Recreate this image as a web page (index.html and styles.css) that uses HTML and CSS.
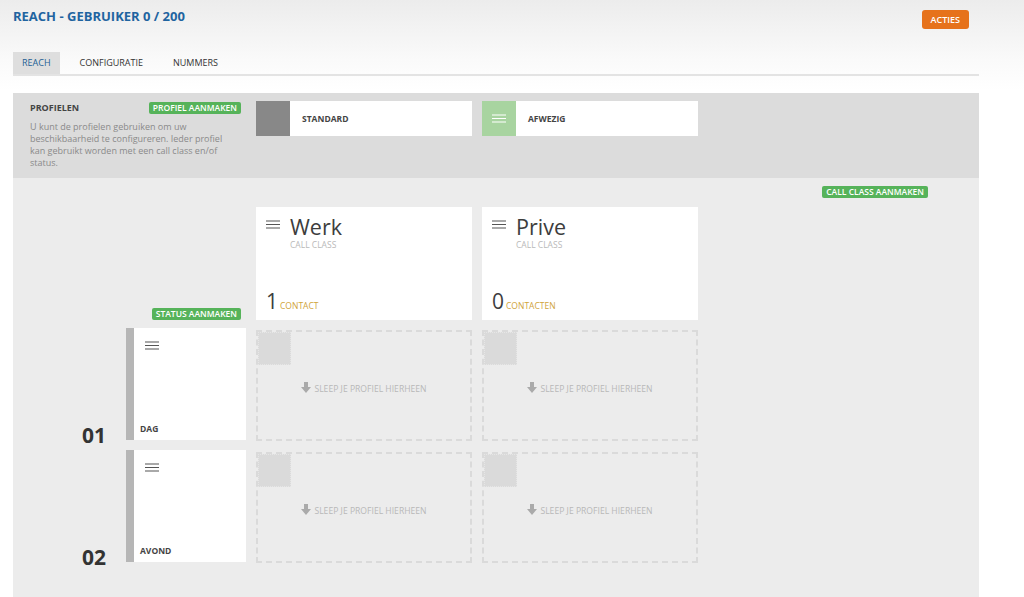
FILE: index.html
```html
<!DOCTYPE html>
<html lang="nl">
<head>
<meta charset="utf-8">
<title>Reach</title>
<link rel="stylesheet" href="styles.css">
</head>
<body>
<header class="top">
  <div class="titlebar">
    <h1 class="title">REACH - GEBRUIKER 0 / 200</h1>
    <button class="btn-acties">ACTIES</button>
  </div>
  <nav class="tabs">
    <a class="tab active">REACH</a>
    <a class="tab">CONFIGURATIE</a>
    <a class="tab">NUMMERS</a>
  </nav>
</header>

<main class="panel">
  <section class="profiles">
    <div class="intro">
      <div class="intro-head">
        <span class="intro-label">PROFIELEN</span>
        <span class="badge">PROFIEL AANMAKEN</span>
      </div>
      <p class="intro-text">U kunt de profielen gebruiken om uw beschikbaarheid te configureren. Ieder profiel kan gebruikt worden met een call class en/of status.</p>
    </div>
    <div class="profile-card">
      <span class="swatch swatch-grey"></span>
      <span class="profile-name">STANDARD</span>
    </div>
    <div class="profile-card">
      <span class="swatch swatch-green">
        <svg class="burger" width="14" height="9" viewBox="0 0 14 9"><path d="M0 1h14M0 4.5h14M0 8h14" stroke="#fff" stroke-width="1.2"/></svg>
      </span>
      <span class="profile-name">AFWEZIG</span>
    </div>
  </section>

  <section class="board">
    <div class="cc-actions"><span class="badge">CALL CLASS AANMAKEN</span></div>

    <div class="row cc-row">
      <div class="side side-badge"><span class="badge">STATUS AANMAKEN</span></div>
      <div class="cc-card">
        <div class="cc-head">
          <svg class="burger" width="14" height="9" viewBox="0 0 14 9"><path d="M0 1h14M0 4.5h14M0 8h14" stroke="#555" stroke-width="1.2"/></svg>
          <div>
            <div class="cc-name">Werk</div>
            <div class="cc-sub">CALL CLASS</div>
          </div>
        </div>
        <div class="cc-count"><span class="cc-num">1</span><span class="cc-label">CONTACT</span></div>
      </div>
      <div class="cc-card">
        <div class="cc-head">
          <svg class="burger" width="14" height="9" viewBox="0 0 14 9"><path d="M0 1h14M0 4.5h14M0 8h14" stroke="#555" stroke-width="1.2"/></svg>
          <div>
            <div class="cc-name">Prive</div>
            <div class="cc-sub">CALL CLASS</div>
          </div>
        </div>
        <div class="cc-count"><span class="cc-num">0</span><span class="cc-label">CONTACTEN</span></div>
      </div>
    </div>

    <div class="row status-row">
      <div class="side">
        <span class="status-num">01</span>
        <div class="status-card">
          <svg class="burger" width="14" height="9" viewBox="0 0 14 9"><path d="M0 1h14M0 4.5h14M0 8h14" stroke="#555" stroke-width="1.2"/></svg>
          <span class="status-name">DAG</span>
        </div>
      </div>
      <div class="drop">
        <span class="stamp"></span>
        <span class="drop-text"><svg class="arrow" width="10" height="11" viewBox="0 0 10 11"><path d="M3 0h4v5h3l-5 6-5-6h3z" fill="#aaa"/></svg>SLEEP JE PROFIEL HIERHEEN</span>
      </div>
      <div class="drop">
        <span class="stamp"></span>
        <span class="drop-text"><svg class="arrow" width="10" height="11" viewBox="0 0 10 11"><path d="M3 0h4v5h3l-5 6-5-6h3z" fill="#aaa"/></svg>SLEEP JE PROFIEL HIERHEEN</span>
      </div>
    </div>

    <div class="row status-row">
      <div class="side">
        <span class="status-num">02</span>
        <div class="status-card">
          <svg class="burger" width="14" height="9" viewBox="0 0 14 9"><path d="M0 1h14M0 4.5h14M0 8h14" stroke="#555" stroke-width="1.2"/></svg>
          <span class="status-name">AVOND</span>
        </div>
      </div>
      <div class="drop">
        <span class="stamp"></span>
        <span class="drop-text"><svg class="arrow" width="10" height="11" viewBox="0 0 10 11"><path d="M3 0h4v5h3l-5 6-5-6h3z" fill="#aaa"/></svg>SLEEP JE PROFIEL HIERHEEN</span>
      </div>
      <div class="drop">
        <span class="stamp"></span>
        <span class="drop-text"><svg class="arrow" width="10" height="11" viewBox="0 0 10 11"><path d="M3 0h4v5h3l-5 6-5-6h3z" fill="#aaa"/></svg>SLEEP JE PROFIEL HIERHEEN</span>
      </div>
    </div>
  </section>
</main>
</body>
</html>
```

FILE: styles.css
```css
* { box-sizing: border-box; }

html, body { height: 100%; }

body {
  margin: 0;
  font-family: "Open Sans", "Noto Sans", "Liberation Sans", sans-serif;
  color: #444;
  background: #fff linear-gradient(#ececec 0, #fafafa 60px, #ffffff 90px) no-repeat;
  overflow: hidden;
}

.titlebar {
  display: flex;
  justify-content: space-between;
  align-items: flex-start;
  padding: 7px 55px 0 13px;
  height: 29px;
}

.title {
  margin: 0;
  font-size: 13px;
  line-height: 18px;
  font-weight: 700;
  color: #1f64a0;
}

.btn-acties {
  margin-top: 3px;
  height: 19px;
  padding: 0 9px;
  border: 0;
  border-radius: 3px;
  background: #e6721b;
  color: #fff;
  font-family: inherit;
  font-size: 9px;
  font-weight: 600;
  line-height: 19px;
}

.tabs {
  display: flex;
  margin: 23px 45px 0 13px;
  border-bottom: 2px solid #e3e3e3;
}

.tab {
  height: 22px;
  padding: 0 10px;
  margin-right: 10px;
  font-size: 9px;
  line-height: 22px;
  color: #333;
}

.tab.active {
  background: #dedede;
  color: #235f94;
  padding: 0 9px;
}

.panel {
  margin: 17px 45px 0 13px;
  height: 520px;
  background: #ececec;
}

.profiles {
  display: flex;
  align-items: flex-start;
  height: 85px;
  padding-top: 8px;
  background: #dcdcdc;
}

.intro {
  width: 243px;
  flex: none;
  padding: 0 15px 0 17px;
}

.intro-head {
  display: flex;
  justify-content: space-between;
  align-items: center;
  height: 13px;
}

.intro-label {
  font-size: 9px;
  font-weight: 700;
  color: #444;
}

.badge {
  display: inline-block;
  height: 12px;
  padding: 0 4px;
  border-radius: 2px;
  background: #56b35a;
  color: #fff;
  font-size: 8.5px;
  font-weight: 600;
  line-height: 12px;
  white-space: nowrap;
}

.intro-text {
  max-width: 195px;
  margin: 7px 0 0;
  font-size: 9px;
  line-height: 12px;
  color: #8a8a8a;
}

.profile-card {
  display: flex;
  align-items: center;
  width: 216px;
  height: 35px;
  margin-right: 10px;
  background: #fff;
}

.swatch {
  display: flex;
  align-items: center;
  justify-content: center;
  width: 34px;
  height: 35px;
}

.swatch-grey { background: #888; }
.swatch-green { background: #a8d4a0; }

.profile-name {
  padding-left: 12px;
  font-size: 8.5px;
  font-weight: 700;
  color: #444;
}

.board {
  padding-top: 8px;
}

.cc-actions {
  display: flex;
  justify-content: flex-end;
  padding-right: 51px;
  margin-bottom: 9px;
}

.row {
  display: flex;
}

.side {
  display: flex;
  justify-content: flex-end;
  width: 243px;
  flex: none;
  padding-right: 10px;
}

.side-badge {
  align-items: flex-end;
  padding-right: 15px;
}

.cc-card {
  display: flex;
  flex-direction: column;
  justify-content: space-between;
  width: 216px;
  height: 113px;
  margin-right: 10px;
  padding: 8px 10px 8px;
  background: #fff;
}

.cc-head {
  display: flex;
  align-items: flex-start;
}

.cc-head .burger {
  margin: 5px 10px 0 0;
}

.cc-name {
  font-size: 21.5px;
  line-height: 23px;
  color: #3d3d3d;
}

.cc-sub {
  margin-top: 2px;
  font-size: 8.5px;
  line-height: 10px;
  color: #b9b9b9;
}

.cc-count {
  display: flex;
  align-items: baseline;
}

.cc-num {
  font-size: 21px;
  line-height: 22px;
  color: #3d3d3d;
  margin-right: 2px;
}

.cc-label {
  font-size: 8.5px;
  color: #d0a43a;
}

.status-row {
  margin-top: 8px;
}

.status-row + .status-row {
  margin-top: 10px;
}

.status-num {
  align-self: flex-end;
  margin: 0 20px -5px 0;
  font-size: 21px;
  line-height: 20px;
  font-weight: 700;
  color: #333;
}

.status-card {
  display: flex;
  flex-direction: column;
  justify-content: space-between;
  width: 120px;
  height: 112px;
  padding: 13px 0 6px 6px;
  border-left: 8px solid #b6b6b6;
  background: #fff;
}

.status-card .burger {
  margin-left: 5px;
}

.status-name {
  font-size: 8.5px;
  font-weight: 700;
  color: #444;
}

.drop {
  position: relative;
  display: flex;
  align-items: center;
  justify-content: center;
  width: 216px;
  height: 111px;
  margin: 2px 10px -1px 0;
  padding-top: 6px;
  border: 2px dashed #dadada;
}

.stamp {
  position: absolute;
  left: 0;
  top: 0;
  width: 33px;
  height: 33px;
  background: #dadada;
  border: 1px dotted #e6e6e6;
}

.drop-text {
  display: flex;
  align-items: center;
  font-size: 8.6px;
  color: #b8b8b8;
}

.arrow {
  margin-right: 3px;
  margin-top: -3px;
}
```
